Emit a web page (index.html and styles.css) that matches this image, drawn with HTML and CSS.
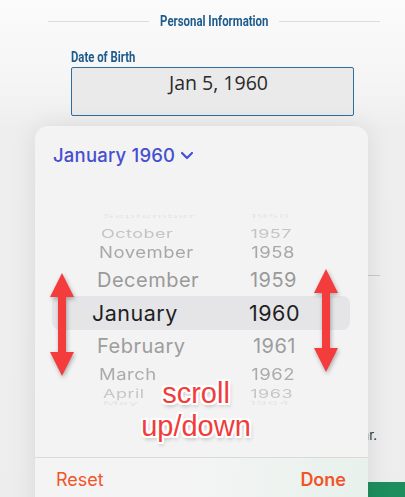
FILE: index.html
```html
<!DOCTYPE html>
<html lang="en">
<head>
  <meta charset="UTF-8">
  <title>Date of Birth Picker</title>
  <link rel="stylesheet" href="styles.css">
</head>
<body>

<div class="page">
  <div class="section-title"><span class="title-box"><span class="narrow">Personal Information</span></span></div>

  <div class="field">
    <div class="field-label"><span class="narrow">Date of Birth</span></div>
    <div class="field-input">Jan 5, 1960</div>
  </div>

  <div class="divider"></div>
  <p class="hint">Use the calendar.</p>
  <div class="continue"></div>
</div>

<div class="picker">
  <div class="picker-header">
    January 1960
    <svg class="chevron" width="14" height="9" viewBox="0 0 14 9">
      <path d="M2 2 L7 7 L12 2" fill="none" stroke="#464fd0" stroke-width="2.2" stroke-linecap="round" stroke-linejoin="round"/>
    </svg>
  </div>

  <div class="wheel">
    <div class="row row-a"><span class="m">September</span><span class="y">1956</span></div>
    <div class="row row-b"><span class="m">October</span><span class="y">1957</span></div>
    <div class="row row-c"><span class="m">November</span><span class="y">1958</span></div>
    <div class="row row-d"><span class="m">December</span><span class="y">1959</span></div>
    <div class="row row-sel"><span class="m">January</span><span class="y">1960</span></div>
    <div class="row row-f"><span class="m">February</span><span class="y">1961</span></div>
    <div class="row row-g"><span class="m">March</span><span class="y">1962</span></div>
    <div class="row row-h"><span class="m">April</span><span class="y">1963</span></div>
    <div class="row row-i"><span class="m">May</span><span class="y">1964</span></div>
  </div>

  <div class="picker-footer">
    <span class="btn-reset">Reset</span>
    <span class="btn-done">Done</span>
  </div>
</div>

<!-- annotation overlay -->
<svg class="arrow arrow-left" width="28" height="110" viewBox="0 0 28 110">
  <path d="M14 3 L26 27 L18 27 L18 82 L26 82 L14 106 L2 82 L10 82 L10 27 L2 27 Z" fill="#f43c3c"/>
</svg>
<svg class="arrow arrow-right" width="28" height="110" viewBox="0 0 28 110">
  <path d="M14 3 L26 27 L18 27 L18 82 L26 82 L14 106 L2 82 L10 82 L10 27 L2 27 Z" fill="#f43c3c"/>
</svg>
<div class="callout">scroll<br>up/down</div>

</body>
</html>
```

FILE: styles.css
```css
body {
  margin: 0;
  width: 405px;
  height: 497px;
  overflow: hidden;
  position: relative;
  background: linear-gradient(#fbfbfb 0, #f5f5f5 80px, #eeeeee 130px, #ededed 100%);
  font-family: Inter, 'Noto Sans', sans-serif;
}

.page {
  padding: 13px 25px 0 48px;
}

/* condensed look: no narrow face installed, so squeeze Roboto */
.narrow {
  display: inline-block;
  white-space: nowrap;
}

.section-title {
  display: flex;
  align-items: center;
  gap: 11px;
  font-family: Roboto, sans-serif;
  font-weight: bold;
  font-size: 15px;
  line-height: 17px;
  color: #1d5b8c;
}

.section-title::before,
.section-title::after {
  content: '';
  flex: 1;
  height: 1px;
  background: #d6dde3;
}

.title-box {
  width: 108px;
  display: flex;
  justify-content: center;
}

.title-box .narrow {
  transform: scaleX(0.76);
}

.field {
  margin: 20px 0 0 23px;
  width: 283px;
}

.field-label {
  font-family: Roboto, sans-serif;
  font-weight: bold;
  font-size: 14px;
  line-height: 15px;
  color: #1d5b8c;
}

.field-label .narrow {
  transform: scaleX(0.81);
  transform-origin: left center;
}

.field-input {
  margin-top: 2px;
  box-sizing: border-box;
  height: 49px;
  border: 1.5px solid #2f6d9f;
  border-radius: 2px;
  background: #eaeaea;
  padding: 2px 0 0 12px;
  text-align: center;
  font-family: 'Open Sans', sans-serif;
  font-size: 19.5px;
  line-height: 26px;
  color: #2a2a2a;
}

.divider {
  margin-top: 159px;
  height: 1px;
  background: #c9c9c9;
}

.hint {
  margin: 151px 3px 0 0;
  text-align: right;
  font-size: 13px;
  line-height: 16px;
  color: #333;
}

.continue {
  margin-top: 39px;
  width: 370px;
  height: 40px;
  background: #1e8e5e;
}

/* date picker popover */
.picker {
  position: absolute;
  top: 126px;
  left: 35px;
  width: 333px;
  height: 400px;
  border-radius: 13px;
  background: #f3f3f4;
  box-shadow: 0 0 26px rgba(0, 0, 0, 0.09);
  overflow: hidden;
}

.picker-header {
  height: 80px;
  box-sizing: border-box;
  padding: 17px 17px 0 18px;
  font-size: 18.5px;
  font-weight: 500;
  letter-spacing: 0.2px;
  line-height: 24px;
  color: #464fd0;
  display: flex;
  align-items: flex-start;
}

.chevron {
  margin: 8px 0 0 5px;
}

.wheel {
  height: 251px;
}

.row {
  display: flex;
  align-items: center;
  margin: 0 18px 0 17px;
  font-size: 19px;
  letter-spacing: 0.5px;
  color: #a3a3a3;
  white-space: nowrap;
}

.row span {
  display: inline-block;
}

.row .y {
  margin-left: auto;
}

.row-a { height: 20px; font-size: 17px; color: #e4e4e4; }
.row-a .m { padding-left: 51px; transform: scaleY(0.25); }
.row-a .y { padding-right: 60px; transform: scaleY(0.25); }

.row-b { height: 14px; font-size: 18px; color: #c4c4c4; }
.row-b .m { padding-left: 49px; transform: scaleY(0.65); }
.row-b .y { padding-right: 58px; transform: scaleY(0.65); }

.row-c { height: 24px; font-size: 18.5px; color: #a8a8a8; }
.row-c .m { padding-left: 47px; transform: scaleY(0.88); }
.row-c .y { padding-right: 55px; transform: scaleY(0.88); }

.row-d { height: 32px; font-size: 20px; color: #9a9a9a; }
.row-d .m { padding-left: 45px; }
.row-d .y { padding-right: 53px; }

.row-sel {
  height: 34px;
  border-radius: 8px;
  background: #e5e5e7;
  font-size: 21.5px;
  color: #1f1f1f;
}
.row-sel .m { padding-left: 40px; }
.row-sel .y { padding-right: 50px; }

.row-f { height: 32px; font-size: 20px; color: #9d9d9d; }
.row-f .m { padding-left: 45px; }
.row-f .y { padding-right: 54px; }

.row-g { height: 24px; font-size: 18.5px; color: #ababab; }
.row-g .m { padding-left: 47px; transform: scaleY(0.88); }
.row-g .y { padding-right: 55px; transform: scaleY(0.88); }

.row-h { height: 14px; font-size: 18px; color: #c6c6c6; }
.row-h .m { padding-left: 51px; transform: scaleY(0.65); }
.row-h .y { padding-right: 57px; transform: scaleY(0.65); }

.row-i { height: 6px; font-size: 17px; color: #e4e4e4; }
.row-i .m { padding-left: 51px; transform: scaleY(0.25); }
.row-i .y { padding-right: 60px; transform: scaleY(0.25); }

.picker-footer {
  border-top: 1px solid #dadada;
  height: 70px;
  padding: 10px 22px 0 21px;
  display: flex;
  justify-content: space-between;
  font-size: 18px;
  line-height: 24px;
  color: #f2542a;
  background: linear-gradient(105deg, #f4f4f5 45%, #e6f1ea 100%);
}

.btn-done {
  font-weight: 600;
}

/* annotations */
.arrow {
  position: absolute;
  filter: drop-shadow(1px 2px 2px rgba(0, 0, 0, 0.3));
}

.arrow-left {
  left: 48px;
  top: 270px;
}

.arrow-right {
  left: 312px;
  top: 266px;
}

.callout {
  position: absolute;
  left: 96px;
  top: 377px;
  width: 200px;
  text-align: center;
  font-family: 'Liberation Sans', Arial, sans-serif;
  font-size: 29px;
  line-height: 33px;
  color: #f23b3b;
  text-shadow:
    2px 0 0 #fff, -2px 0 0 #fff, 0 2px 0 #fff, 0 -2px 0 #fff,
    2px 2px 0 #fff, -2px -2px 0 #fff, 2px -2px 0 #fff, -2px 2px 0 #fff,
    1px 3px 4px rgba(0, 0, 0, 0.35);
}
```
